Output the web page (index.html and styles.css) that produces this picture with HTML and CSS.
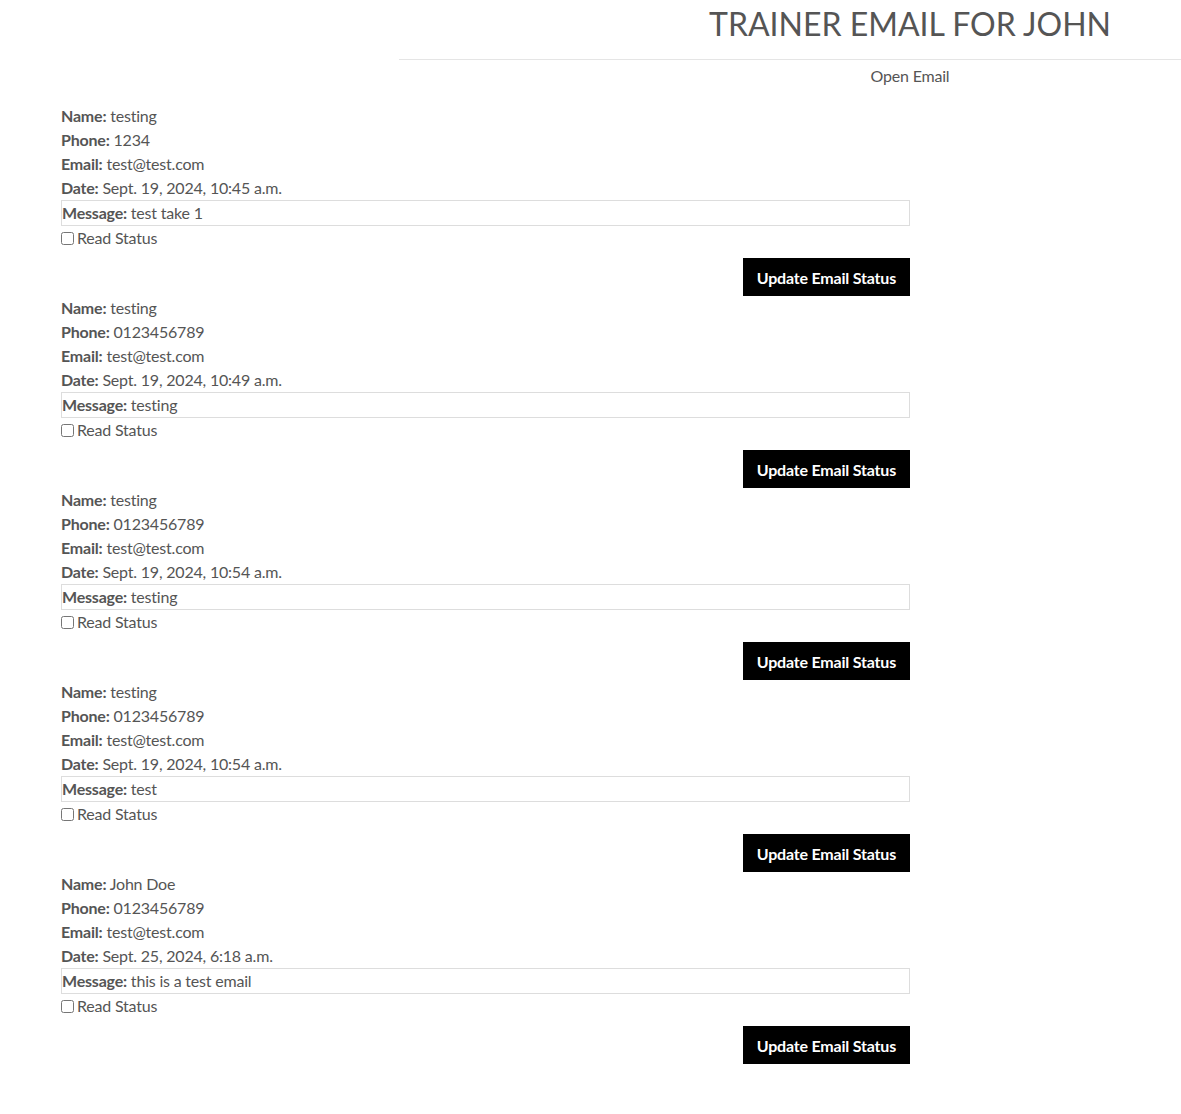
FILE: index.html
```html
<!DOCTYPE html>
<html>
<head>
<meta charset="utf-8">
<link rel="stylesheet" href="styles.css">
</head>
<body>
<header class="page-header">
  <h1 class="title">TRAINER EMAIL FOR JOHN</h1>
  <hr class="divider">
  <p class="subtitle">Open Email</p>
</header>
<main class="emails">
  <form class="email">
    <div class="line"><b>Name:</b> testing</div>
    <div class="line"><b>Phone:</b> 1234</div>
    <div class="line"><b>Email:</b> test@test.com</div>
    <div class="line"><b>Date:</b> Sept. 19, 2024, 10:45 a.m.</div>
    <div class="message"><b>Message:</b> test take 1</div>
    <label class="status"><input type="checkbox">Read Status</label>
    <div class="actions"><button type="button" class="btn">Update Email Status</button></div>
  </form>
  <form class="email">
    <div class="line"><b>Name:</b> testing</div>
    <div class="line"><b>Phone:</b> 0123456789</div>
    <div class="line"><b>Email:</b> test@test.com</div>
    <div class="line"><b>Date:</b> Sept. 19, 2024, 10:49 a.m.</div>
    <div class="message"><b>Message:</b> testing</div>
    <label class="status"><input type="checkbox">Read Status</label>
    <div class="actions"><button type="button" class="btn">Update Email Status</button></div>
  </form>
  <form class="email">
    <div class="line"><b>Name:</b> testing</div>
    <div class="line"><b>Phone:</b> 0123456789</div>
    <div class="line"><b>Email:</b> test@test.com</div>
    <div class="line"><b>Date:</b> Sept. 19, 2024, 10:54 a.m.</div>
    <div class="message"><b>Message:</b> testing</div>
    <label class="status"><input type="checkbox">Read Status</label>
    <div class="actions"><button type="button" class="btn">Update Email Status</button></div>
  </form>
  <form class="email">
    <div class="line"><b>Name:</b> testing</div>
    <div class="line"><b>Phone:</b> 0123456789</div>
    <div class="line"><b>Email:</b> test@test.com</div>
    <div class="line"><b>Date:</b> Sept. 19, 2024, 10:54 a.m.</div>
    <div class="message"><b>Message:</b> test</div>
    <label class="status"><input type="checkbox">Read Status</label>
    <div class="actions"><button type="button" class="btn">Update Email Status</button></div>
  </form>
  <form class="email">
    <div class="line"><b>Name:</b> John Doe</div>
    <div class="line"><b>Phone:</b> 0123456789</div>
    <div class="line"><b>Email:</b> test@test.com</div>
    <div class="line"><b>Date:</b> Sept. 25, 2024, 6:18 a.m.</div>
    <div class="message"><b>Message:</b> this is a test email</div>
    <label class="status"><input type="checkbox">Read Status</label>
    <div class="actions"><button type="button" class="btn">Update Email Status</button></div>
  </form>
</main>
</body>
</html>
```
FILE: styles.css
```css
* { box-sizing: border-box; }
body {
  margin: 0;
  font-family: Lato, "Liberation Sans", sans-serif;
  font-size: 16px;
  line-height: 24px;
  letter-spacing: -0.2px;
  color: #555;
  background: #fff;
}
.page-header {
  margin-left: 399px;
}
.title {
  margin: 0;
  padding: 4px 0 0 240px;
  font-size: 32px;
  font-weight: 400;
  line-height: 40px;
  letter-spacing: 0;
  text-align: center;
  color: #555;
}
.divider {
  margin: 15px 0 4px;
  border: 0;
  border-top: 1px solid #e5e5e5;
}
.subtitle {
  margin: 0;
  padding-left: 240px;
  text-align: center;
}
.emails {
  margin: 16px 0 40px 61px;
  width: 849px;
}
.email b { font-weight: 700; }
.message {
  border: 1px solid #ddd;
}
.status {
  display: flex;
  align-items: center;
}
.status input {
  width: 13px;
  height: 13px;
  margin: 0 3px 0 0;
}
.actions {
  display: flex;
  justify-content: flex-end;
  margin-top: 8px;
}
.btn {
  background: #000;
  color: #fff;
  border: 0;
  border-radius: 0;
  font-family: Lato, "Liberation Sans", sans-serif;
  font-size: 16px;
  font-weight: 700;
  letter-spacing: -0.2px;
  height: 38px;
  padding: 0 14px;
}
```
